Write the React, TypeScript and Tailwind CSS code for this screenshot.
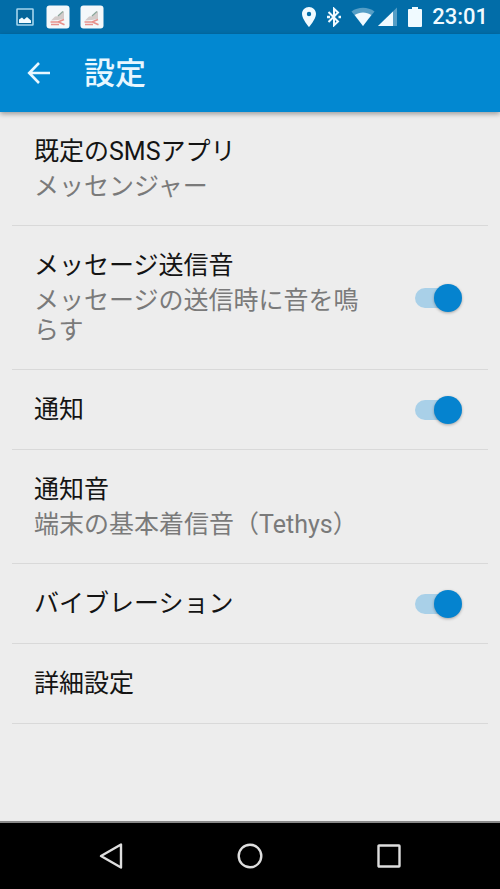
import { useState } from "react"

type Setting = {
  id: string
  title: string
  summary?: string
  toggle?: boolean
}

const settings: Setting[] = [
  { id: "default-app", title: "既定のSMSアプリ", summary: "メッセンジャー" },
  { id: "send-sound", title: "メッセージ送信音", summary: "メッセージの送信時に音を鳴らす", toggle: true },
  { id: "notify", title: "通知", toggle: true },
  { id: "notify-sound", title: "通知音", summary: "端末の基本着信音（Tethys）" },
  { id: "vibrate", title: "バイブレーション", toggle: true },
  { id: "advanced", title: "詳細設定" },
]

function AppBadge() {
  return (
    <svg viewBox="0 0 24 24" className="w-6 h-6">
      <rect x="0.5" y="0.5" width="23" height="23" rx="3" fill="#f4f8fa" />
      <path d="M5 15.500 L9 11.500 L13 11 L18 6 V14 L12 15Z" fill="#d3cccb" />
      <path d="M12 11 L17 6.500" stroke="#8ba59a" strokeWidth="1.300" />
      <path d="M4.500 17 H12 L18 14.500 M5 19.500 H13 M12.500 17 L18.500 19.800" stroke="#e8918c" strokeWidth="1.700" fill="none" />
    </svg>
  )
}

function StatusBar() {
  return (
    <div className="flex h-[34px] items-center justify-between bg-[#026da8] pl-4 pr-3">
      <div className="flex items-center">
        <svg viewBox="0 0 18 18" className="w-[18px] h-[18px]">
          <rect x="1" y="1" width="16" height="16" rx="0.5" fill="#04659a" stroke="#a5d5ed" strokeWidth="1.600" />
          <path d="M3 15 V11.500 L6 9.500 L8 11.500 L11 9 L15 12.500 V15Z" fill="#f2fbff" />
        </svg>
        <div className="ml-3 flex gap-[10px]">
          <AppBadge />
          <AppBadge />
        </div>
      </div>
      <div className="flex items-center text-[#f0faff]">
        <svg viewBox="0 0 14 20" className="w-[14px] h-5" fill="currentColor">
          <path fillRule="evenodd" d="M7 0C3.100 0 0 3.100 0 7c0 5 7 13 7 13s7-8 7-13c0-3.900-3.100-7-7-7zm0 4.800a2.200 2.200 0 1 1 0 4.400 2.200 2.200 0 0 1 0-4.400z" />
        </svg>
        <svg viewBox="0 0 14 20" className="ml-[11px] w-[14px] h-5" fill="none" stroke="currentColor" strokeWidth="2">
          <path d="M1.500 5 L11 14.500 L7 18.300 V1.700 L11 5.500 L1.500 15" />
          <path d="M0 10 h3 M11.500 10 h2.500" strokeWidth="2.400" />
        </svg>
        <svg viewBox="0 0 24 20" className="ml-[10px] w-6 h-5" fill="currentColor">
          <path d="M0.500 4.500 C7 -0.500 17 -0.500 23.500 4.500 L12 19Z" opacity="0.350" />
          <path d="M3.700 8 C8.500 4.600 15.500 4.600 20.300 8 L12 19Z" />
        </svg>
        <svg viewBox="0 0 20 20" className="ml-[3px] w-5 h-5" fill="currentColor">
          <path d="M0 19 L19 0.500 V19Z" opacity="0.350" />
          <path d="M0 19 L15 4.400 V19Z" />
        </svg>
        <svg viewBox="0 0 14 20" className="ml-[10px] w-[14px] h-5" fill="currentColor">
          <path d="M4 0h6v2h3a1 1 0 0 1 1 1v16a1 1 0 0 1-1 1H1a1 1 0 0 1-1-1V3a1 1 0 0 1 1-1h3z" />
        </svg>
        <span className="ml-[10px] text-[22px] font-medium leading-8">23:01</span>
      </div>
    </div>
  )
}

function SettingText({ item }: { item: Setting }) {
  return (
    <>
      <span className="block text-[25px] leading-[36px] text-[#141414]">{item.title}</span>
      {item.summary && (
        <span className="my-0.5 block text-[25px] leading-[30px] text-[#7a7a7a]">{item.summary}</span>
      )}
    </>
  )
}

export default function App() {
  const [enabled, setEnabled] = useState<Record<string, boolean>>({
    "send-sound": true,
    notify: true,
    vibrate: true,
  })

  return (
    <div className="flex min-h-screen flex-col bg-[#ededed] font-['Roboto','Noto_Sans_CJK_JP',sans-serif]" lang="ja">
      <StatusBar />
      <header className="flex h-[78px] items-center bg-[#0288d1] pl-[27px] text-[#e8f7ff] shadow-[0_2px_5px_rgba(0,0,0,0.35)]">
        <button aria-label="戻る" className="h-6 w-6">
          <svg viewBox="0 0 24 24" className="w-6 h-6" fill="none" stroke="currentColor" strokeWidth="2.600">
            <path d="M23 12 H2.500 M12 2 L2.200 12 L12 22" />
          </svg>
        </button>
        <h1 className="ml-[33px] pt-0.5 text-[31px] font-medium leading-10">設定</h1>
      </header>

      <main className="flex-1 px-3">
        <ul>
          {settings.map((item) => (
            <li key={item.id} className="border-b border-[#d9d9d9]">
              {item.toggle ? (
                <div className="flex items-center justify-between gap-10 pt-[22px] pb-[21px] pl-[22px] pr-[26px]">
                  <label htmlFor={item.id} className="flex-1">
                    <SettingText item={item} />
                  </label>
                  <input
                    id={item.id}
                    type="checkbox"
                    role="switch"
                    checked={enabled[item.id]}
                    onChange={(e) => setEnabled({ ...enabled, [item.id]: e.target.checked })}
                    className="flex h-7 w-[47px] shrink-0 appearance-none items-center before:h-5 before:w-10 before:shrink-0 before:rounded-full before:bg-[#c4c4c4] checked:before:bg-[#a9d0e8] after:-ml-10 after:size-7 after:shrink-0 after:rounded-full after:bg-[#f5f5f5] after:shadow-[0_1px_3px_rgba(0,0,0,0.3)] checked:after:-ml-[21px] checked:after:bg-[#0583cf]"
                  />
                </div>
              ) : (
                <button className="block w-full pt-[22px] pb-[21px] pl-[22px] pr-[26px] text-left">
                  <SettingText item={item} />
                </button>
              )}
            </li>
          ))}
        </ul>
      </main>

      <nav className="grid h-[68px] grid-cols-3 place-items-center border-t-2 border-[#8a8a8a] bg-black px-[41px] text-[#dedede]">
        <button aria-label="戻る">
          <svg viewBox="0 0 28 28" className="w-7 h-7" fill="none" stroke="currentColor" strokeWidth="2.400" strokeLinejoin="round">
            <path d="M4 14 L24 2.500 V25.500Z" />
          </svg>
        </button>
        <button aria-label="ホーム">
          <svg viewBox="0 0 28 28" className="w-7 h-7" fill="none" stroke="currentColor" strokeWidth="2.400">
            <circle cx="14" cy="14" r="11.300" />
          </svg>
        </button>
        <button aria-label="最近使ったアプリ">
          <svg viewBox="0 0 28 28" className="w-7 h-7" fill="none" stroke="currentColor" strokeWidth="2.400" strokeLinejoin="round">
            <rect x="3.500" y="3.500" width="21" height="21" rx="0.500" />
          </svg>
        </button>
      </nav>
    </div>
  )
}
